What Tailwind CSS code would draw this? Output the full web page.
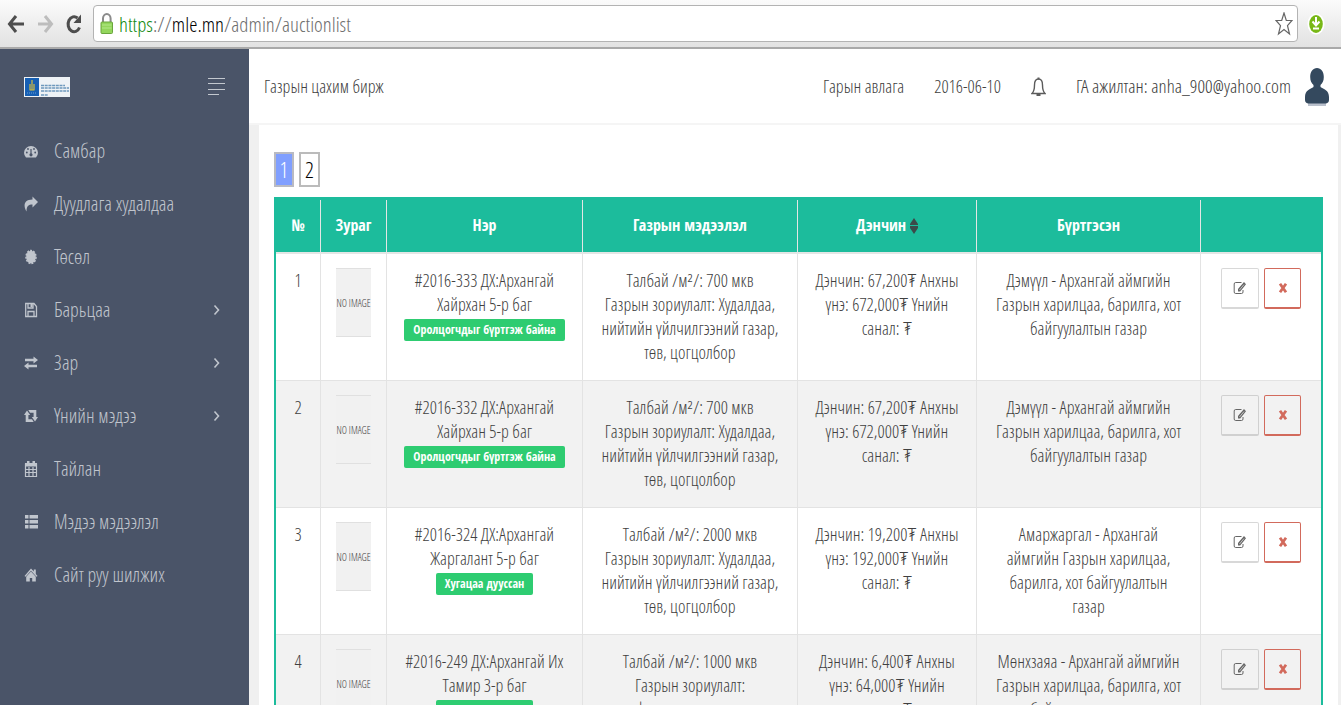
<!DOCTYPE html>
<html lang="mn">
<head>
    <meta charset="UTF-8">
    <meta name="viewport" content="width=device-width, initial-scale=1.0">
    <title>Газрын цахим бирж</title>
    <script src="https://cdn.jsdelivr.net/npm/@tailwindcss/browser@4"></script>
</head>
<body class="h-screen overflow-hidden flex flex-col bg-[#f0f0f0] text-[#404040] text-[18px] font-['Open_Sans_Condensed_Light','Roboto_Condensed_Light','Liberation_Sans',sans-serif]">

    <!-- Icons -->
    <svg class="hidden">
        <symbol id="i-chevron" viewBox="0 0 8 14"><path d="M1.5 2.500l4 4.500-4 4.500" fill="none" stroke="currentColor" stroke-width="1.6"/></symbol>
        <symbol id="i-edit" viewBox="0 0 14 14"><path d="M8.500 1.500H2.700A1.500 1.500 0 0 0 1.200 3V11A1.500 1.500 0 0 0 2.700 12.500H8.500A1.500 1.500 0 0 0 10 11V9" fill="none" stroke="currentColor" stroke-width="1"/><path d="M5 10.500V8L11 1l2 2.200L7.200 10.500z" fill="currentColor"/><path d="M6.500 9l4.500-5.500" stroke="#fff" stroke-width=".6"/></symbol>
        <symbol id="i-times" viewBox="0 0 10 12"><path d="M2 1.800l6 8.400M8 1.800l-6 8.400" stroke="currentColor" stroke-width="2.800"/></symbol>
    </svg>

    <!-- Browser bar -->
    <div class="h-[49px] shrink-0 flex items-center pl-[7px] pr-4 border-b-2 border-[#a9a9a9] bg-gradient-to-b from-[#fbfbfb] to-[#e2e2e2]">
        <button class="w-[18px] h-5 mr-3 text-[#4d4d4d]" aria-label="Back">
            <svg class="w-full h-full" viewBox="0 0 18 20" fill="none" stroke="currentColor" stroke-width="3"><path d="M17 10H3M9 2L2.500 10 9 18"/></svg>
        </button>
        <button class="w-[18px] h-5 mr-[10px] text-[#bdbdbd]" aria-label="Forward">
            <svg class="w-full h-full" viewBox="0 0 18 20" fill="none" stroke="currentColor" stroke-width="3"><path d="M1 10h13M8 2l6.500 8L8 18"/></svg>
        </button>
        <button class="w-[18px] h-5 mr-[10px] text-[#4d4d4d]" aria-label="Reload">
            <svg class="w-full h-full" viewBox="0 0 18 20"><path d="M12.500 4A6 7.500 0 1 0 14.500 13.500" fill="none" stroke="currentColor" stroke-width="3"/><path d="M16 .500V9H8.500z" fill="currentColor"/></svg>
        </button>
        <div class="flex-1 h-[37px] flex items-center px-1 rounded-sm border border-[#b3b3b3] bg-white">
            <svg class="w-[21px] h-6" viewBox="0 0 21 24"><path d="M5 11V6.500a3.800 4.500 0 0 1 7.600 0V11" fill="none" stroke="#8b8b8b" stroke-width="2"/><rect x="3" y="10" width="11.500" height="11.500" rx="1" fill="#93d65c" stroke="#6aa53d"/><path d="M4 13h9.500M4 16h9.500" stroke="#b4e88a"/></svg>
            <div class="flex-1 text-[21px] leading-8 text-[#6e6e6e]"><span class="text-[#0f8a0f]">https</span>://<span class="text-black">mle.mn</span>/admin/auctionlist</div>
            <svg class="w-[18px] h-6" viewBox="0 0 18 24" fill="#fff" stroke="#666" stroke-width="1.200"><path d="M9 1l2.300 7.500H17l-4.500 5.200L14.500 22 9 17.500 3.500 22l2-8.300L1 8.500h5.700z"/></svg>
        </div>
        <svg class="w-[18px] h-[22px] ml-[9px]" viewBox="0 0 18 22"><ellipse cx="9" cy="11" rx="8.500" ry="10.500" fill="#fff"/><ellipse cx="9" cy="11" rx="6.800" ry="9" fill="#78b817"/><path d="M9 4v7M5.500 8.500L9 12.500l3.500-4M6 15.500h6" fill="none" stroke="#fff" stroke-width="2"/></svg>
    </div>

    <div class="flex-1 min-h-0 flex">
        <!-- Sidebar -->
        <aside class="w-[249px] shrink-0 bg-[#4a5468] text-[#c0c5cd]">
            <div class="h-[75px] flex items-center justify-between pl-6 pr-6">
                <svg class="w-[46px] h-5" viewBox="0 0 46 20"><path fill="#eef2f6" d="M0 0h46v20H0z"/><path fill="#1760b4" d="M1 1h14v18H1z"/><path d="M8 3v5M6 7v6M10 7v6M8 8v5M5.500 13h5" stroke="#d5bd3e" stroke-width="1.200"/><path d="M3 16h10" stroke="#6d9cd0" stroke-dasharray="1 1"/><path d="M17 8.500h24M17 11h28M17 14h28M17 18h7" stroke="#6d98bd" stroke-width="1.500" stroke-dasharray="3 .7"/></svg>
                <button aria-label="Цэс"><svg class="w-[17px] h-5" viewBox="0 0 17 20" stroke="#c3c8cf" stroke-width="1"><path d="M0 1.500h17M0 6.500h17M0 12.500h17M0 17.500h11"/></svg></button>
            </div>
            <nav class="flex flex-col text-[20px]">
                <a href="#" class="h-[53px] flex items-center gap-4 pl-6 pr-7">
                    <svg class="w-[14px] h-[14px]" viewBox="0 0 14 14"><path d="M2 13.500A7 6.700 0 1 1 12 13.500z" fill="currentColor"/><path d="M7 12V5" stroke="#4a5468" stroke-width="1.200"/><g fill="#4a5468"><circle cx="7" cy="10.800" r="1.600"/><circle cx="2.800" cy="8.500" r=".9"/><circle cx="4" cy="5" r=".9"/><circle cx="10" cy="5" r=".9"/><circle cx="11.200" cy="8.500" r=".9"/></g></svg>
                    <span>Самбар</span>
                </a>
                <a href="#" class="h-[53px] flex items-center gap-4 pl-6 pr-7">
                    <svg class="w-[14px] h-4" viewBox="0 0 14 16"><path d="M8.500 .500L14 6l-5.500 5.500V8.500C4.500 8.500 2.500 10 2.500 15.500-.5 11-1 3.500 8.500 3.500z" fill="currentColor"/></svg>
                    <span>Дуудлага худалдаа</span>
                </a>
                <a href="#" class="h-[53px] flex items-center gap-4 pl-6 pr-7">
                    <svg class="w-[14px] h-4" viewBox="0 0 14 16"><ellipse cx="7" cy="8" rx="4.800" ry="6.300" fill="currentColor"/><ellipse cx="7" cy="8" rx="5" ry="6.500" fill="none" stroke="currentColor" stroke-width="1.500" stroke-dasharray="2 1.200"/></svg>
                    <span>Төсөл</span>
                </a>
                <a href="#" class="h-[53px] flex items-center gap-4 pl-6 pr-7">
                    <svg class="w-[14px] h-4" viewBox="0 0 14 16" fill="none" stroke="currentColor" stroke-width="1.300"><path d="M1.700 1.500H10l2.500 3v10H1.700zM4 14V9.500h6V14M4 2v4h5V2"/><path d="M7.500 2v3" stroke-width="2"/></svg>
                    <span class="flex-1">Барьцаа</span>
                    <svg class="w-2 h-[14px]"><use href="#i-chevron"/></svg>
                </a>
                <a href="#" class="h-[53px] flex items-center gap-4 pl-6 pr-7">
                    <svg class="w-[14px] h-[14px]" viewBox="0 0 14 14" fill="currentColor"><path d="M1 2.700h8.500V.500L14 4l-4.500 3.500V5.300H1zM13 8.700H4.500V6.500L0 10l4.500 3.500v-2.200H13z"/></svg>
                    <span class="flex-1">Зар</span>
                    <svg class="w-2 h-[14px]"><use href="#i-chevron"/></svg>
                </a>
                <a href="#" class="h-[53px] flex items-center gap-4 pl-6 pr-7">
                    <svg class="w-[14px] h-[14px]" viewBox="0 0 14 14" fill="currentColor"><path d="M3 1.500L6.200 6H4.400v4.200H8L9.700 13H1.700V6H0zM11 12.500L7.800 8h1.800V3.800H6L4.300 1h8v7H14z"/></svg>
                    <span class="flex-1">Үнийн мэдээ</span>
                    <svg class="w-2 h-[14px]"><use href="#i-chevron"/></svg>
                </a>
                <a href="#" class="h-[53px] flex items-center gap-4 pl-6 pr-7">
                    <svg class="w-[14px] h-[18px]" viewBox="0 0 14 18"><path d="M1.500 4h11v12.500h-11zM1.500 9.500h11M1.500 12.500h11M5 7v9M9 7v9" fill="none" stroke="currentColor" stroke-width="1.200"/><path d="M1 3h12v3.500H1zM3 1h2.500v3H3zM8.500 1H11v3H8.500z" fill="currentColor"/></svg>
                    <span>Тайлан</span>
                </a>
                <a href="#" class="h-[53px] flex items-center gap-4 pl-6 pr-7">
                    <svg class="w-[14px] h-[14px]" viewBox="0 0 14 14" fill="currentColor"><path d="M1 0h3.500v3.500H1zM5.500 0H14v3.500H5.500zM1 5h3.500v3.500H1zM5.500 5H14v3.500H5.500zM1 10h3.500v3.500H1zM5.500 10H14v3.500H5.500z"/></svg>
                    <span>Мэдээ мэдээлэл</span>
                </a>
                <a href="#" class="h-[53px] flex items-center gap-4 pl-6 pr-7">
                    <svg class="w-[14px] h-[14px]" viewBox="0 0 14 14" fill="currentColor"><path d="M7 .500L9.800 3.500V1.500h2V6L13.500 8l-1 .800L7 2.800 1.500 8.800.500 8z"/><path d="M7 3.500l4.800 5.300V13.500H8.200V10H5.800v3.500H2.200V8.800z"/></svg>
                    <span>Сайт руу шилжих</span>
                </a>
            </nav>
        </aside>

        <div class="flex-1 min-w-0 flex flex-col">
            <!-- Top bar -->
            <header class="h-[76px] shrink-0 flex items-center justify-between pl-[15px] pr-3 pt-px bg-white border-b-2 border-[#f5f5f5]">
                <span>Газрын цахим бирж</span>
                <div class="flex items-center gap-[30px]">
                    <a href="#">Гарын авлага</a>
                    <span>2016-06-10</span>
                    <button aria-label="Мэдэгдэл">
                        <svg class="w-[15px] h-5" viewBox="0 0 15 20"><path d="M7.500 2C4.500 2 3.500 4.500 3.500 8c0 5-1 7-2.500 8.500h13C12.500 15 11.500 13 11.500 8c0-3.500-1-6-4-6z" fill="none" stroke="#5c5c5c" stroke-width="1.400"/><path d="M7.500.500v2M5.500 18h4" stroke="#5c5c5c" stroke-width="2"/></svg>
                    </button>
                    <a href="#" class="flex items-center gap-[14px] text-[19px]">ГА ажилтан: anha_900@yahoo.com
                        <svg class="w-6 h-[38px]" viewBox="0 0 24 38"><path d="M3 35h18v3H3z" fill="#b9c0cc"/><path d="M12 0c4 0 6.800 3.500 6.800 9 0 4-1.300 6-3.300 8v2c3 2 8.500 3 8.500 10v3c0 2-1.500 3.500-3.500 3.500h-17C1.500 35.500 0 34 0 32v-3c0-7 5.500-8 8.500-10v-2c-2-2-3.300-4-3.300-8C5.200 3.500 8 0 12 0z" fill="#34495e"/></svg>
                    </a>
                </div>
            </header>

            <!-- Content -->
            <main class="flex-1 ml-[10px] mr-[3px] px-[15px] pt-[27px] bg-white">
                <div class="flex gap-[5px] mb-[10px] text-[22px]">
                    <a href="#" class="w-5 h-[35px] flex items-center justify-center border-2 border-[#b9bac2] bg-[#809fff] text-white">1</a>
                    <a href="#" class="w-[21px] h-[35px] flex items-center justify-center border-2 border-[#bbbbbb] text-black">2</a>
                </div>

                <table class="w-full table-fixed border-separate border-spacing-0 border-2 border-t-[3px] border-[#1cbc9c] text-center leading-6">
                    <colgroup>
                        <col class="w-[45px]">
                        <col class="w-[66px]">
                        <col class="w-[196px]">
                        <col class="w-[215px]">
                        <col class="w-[179px]">
                        <col class="w-[224px]">
                        <col class="w-[120px]">
                    </colgroup>
                    <thead class="bg-[#1cbc9c] text-white text-[16px] font-['Open_Sans_Condensed',sans-serif]">
                        <tr class="h-[54px] [&>th]:pb-[3px] [&>th]:border-b-2 [&>th]:border-b-[#e3e6e5] [&>th]:border-r [&>th]:border-r-[#e3e6e5] [&>th:last-child]:border-r-0">
                            <th>№</th>
                            <th>Зураг</th>
                            <th>Нэр</th>
                            <th>Газрын мэдээлэл</th>
                            <th>Дэнчин <svg class="inline w-2 h-4 align-[-3px]" viewBox="0 0 8 16" fill="#3b4a4a"><path d="M4 0l4 6v1H0V6zM4 16l4-6V8H0v2z"/></svg></th>
                            <th>Бүртгэсэн</th>
                            <th></th>
                        </tr>
                    </thead>
                    <tbody class="[&>tr]:h-[127px] [&>tr:nth-child(even)]:bg-[#f2f2f2] [&_td]:align-top [&_td]:pt-[14px] [&_td]:border-b [&_td]:border-r [&_td]:border-[#e3e3e3] [&_td:last-child]:border-r-0">
                        <tr>
                            <td>1</td>
                            <td><div class="w-[35px] h-[69px] mx-auto flex items-center justify-center border-y border-[#e0e0e0] bg-[#f1f1f1] text-[10px] whitespace-nowrap">NO IMAGE</div></td>
                            <td>#2016-333 ДХ:Архангай<br>Хайрхан 5-р баг<br><span class="block w-fit mx-auto mt-[3px] px-[9px] rounded-xs bg-[#2ecc71] text-white text-[12px] leading-[22px] font-['Open_Sans_Condensed',sans-serif] font-bold">Оролцогчдыг бүртгэж байна</span></td>
                            <td>Талбай /м²/: 700 мкв<br>Газрын зориулалт: Худалдаа,<br>нийтийн үйлчилгээний газар,<br>төв, цогцолбор</td>
                            <td>Дэнчин: 67,200₮ Анхны<br>үнэ: 672,000₮ Үнийн<br>санал: ₮</td>
                            <td>Дэмүүл - Архангай аймгийн<br>Газрын харилцаа, барилга, хот<br>байгуулалтын газар</td>
                            <td><div class="flex justify-center gap-[5px]">
                                <button class="w-[38px] h-[41px] flex items-center justify-center rounded-xs border border-b-2 border-[#d8d8d8] text-[#666666]" aria-label="Засах"><svg class="w-[14px] h-[14px]"><use href="#i-edit"/></svg></button>
                                <button class="w-[37px] h-[41px] flex items-center justify-center rounded-xs border border-b-2 border-[#d26a5c] text-[#d26a5c]" aria-label="Устгах"><svg class="w-[10px] h-3"><use href="#i-times"/></svg></button>
                            </div></td>
                        </tr>
                        <tr>
                            <td>2</td>
                            <td><div class="w-[35px] h-[69px] mx-auto flex items-center justify-center border-y border-[#e0e0e0] bg-[#f1f1f1] text-[10px] whitespace-nowrap">NO IMAGE</div></td>
                            <td>#2016-332 ДХ:Архангай<br>Хайрхан 5-р баг<br><span class="block w-fit mx-auto mt-[3px] px-[9px] rounded-xs bg-[#2ecc71] text-white text-[12px] leading-[22px] font-['Open_Sans_Condensed',sans-serif] font-bold">Оролцогчдыг бүртгэж байна</span></td>
                            <td>Талбай /м²/: 700 мкв<br>Газрын зориулалт: Худалдаа,<br>нийтийн үйлчилгээний газар,<br>төв, цогцолбор</td>
                            <td>Дэнчин: 67,200₮ Анхны<br>үнэ: 672,000₮ Үнийн<br>санал: ₮</td>
                            <td>Дэмүүл - Архангай аймгийн<br>Газрын харилцаа, барилга, хот<br>байгуулалтын газар</td>
                            <td><div class="flex justify-center gap-[5px]">
                                <button class="w-[38px] h-[41px] flex items-center justify-center rounded-xs border border-b-2 border-[#d0d0d0] text-[#666666]" aria-label="Засах"><svg class="w-[14px] h-[14px]"><use href="#i-edit"/></svg></button>
                                <button class="w-[37px] h-[41px] flex items-center justify-center rounded-xs border border-b-2 border-[#d26a5c] text-[#d26a5c]" aria-label="Устгах"><svg class="w-[10px] h-3"><use href="#i-times"/></svg></button>
                            </div></td>
                        </tr>
                        <tr>
                            <td>3</td>
                            <td><div class="w-[35px] h-[69px] mx-auto flex items-center justify-center border-y border-[#e0e0e0] bg-[#f1f1f1] text-[10px] whitespace-nowrap">NO IMAGE</div></td>
                            <td>#2016-324 ДХ:Архангай<br>Жаргалант 5-р баг<br><span class="block w-fit mx-auto mt-[3px] px-[9px] rounded-xs bg-[#2ecc71] text-white text-[12px] leading-[22px] font-['Open_Sans_Condensed',sans-serif] font-bold">Хугацаа дууссан</span></td>
                            <td>Талбай /м²/: 2000 мкв<br>Газрын зориулалт: Худалдаа,<br>нийтийн үйлчилгээний газар,<br>төв, цогцолбор</td>
                            <td>Дэнчин: 19,200₮ Анхны<br>үнэ: 192,000₮ Үнийн<br>санал: ₮</td>
                            <td>Амаржаргал - Архангай<br>аймгийн Газрын харилцаа,<br>барилга, хот байгуулалтын<br>газар</td>
                            <td><div class="flex justify-center gap-[5px]">
                                <button class="w-[38px] h-[41px] flex items-center justify-center rounded-xs border border-b-2 border-[#d8d8d8] text-[#666666]" aria-label="Засах"><svg class="w-[14px] h-[14px]"><use href="#i-edit"/></svg></button>
                                <button class="w-[37px] h-[41px] flex items-center justify-center rounded-xs border border-b-2 border-[#d26a5c] text-[#d26a5c]" aria-label="Устгах"><svg class="w-[10px] h-3"><use href="#i-times"/></svg></button>
                            </div></td>
                        </tr>
                        <tr>
                            <td>4</td>
                            <td><div class="w-[35px] h-[69px] mx-auto flex items-center justify-center border-y border-[#e0e0e0] bg-[#f1f1f1] text-[10px] whitespace-nowrap">NO IMAGE</div></td>
                            <td>#2016-249 ДХ:Архангай Их<br>Тамир 3-р баг<br><span class="block w-fit mx-auto mt-[3px] px-[9px] rounded-xs bg-[#2ecc71] text-white text-[12px] leading-[22px] font-['Open_Sans_Condensed',sans-serif] font-bold">Хугацаа дууссан</span></td>
                            <td>Талбай /м²/: 1000 мкв<br>Газрын зориулалт:<br>фермерүүд эрхлэх</td>
                            <td>Дэнчин: 6,400₮ Анхны<br>үнэ: 64,000₮ Үнийн<br>санал: ₮</td>
                            <td>Мөнхзаяа - Архангай аймгийн<br>Газрын харилцаа, барилга, хот<br>байгуулалтын газар</td>
                            <td><div class="flex justify-center gap-[5px]">
                                <button class="w-[38px] h-[41px] flex items-center justify-center rounded-xs border border-b-2 border-[#d0d0d0] text-[#666666]" aria-label="Засах"><svg class="w-[14px] h-[14px]"><use href="#i-edit"/></svg></button>
                                <button class="w-[37px] h-[41px] flex items-center justify-center rounded-xs border border-b-2 border-[#d26a5c] text-[#d26a5c]" aria-label="Устгах"><svg class="w-[10px] h-3"><use href="#i-times"/></svg></button>
                            </div></td>
                        </tr>
                    </tbody>
                </table>
            </main>
        </div>
    </div>
</body>
</html>
